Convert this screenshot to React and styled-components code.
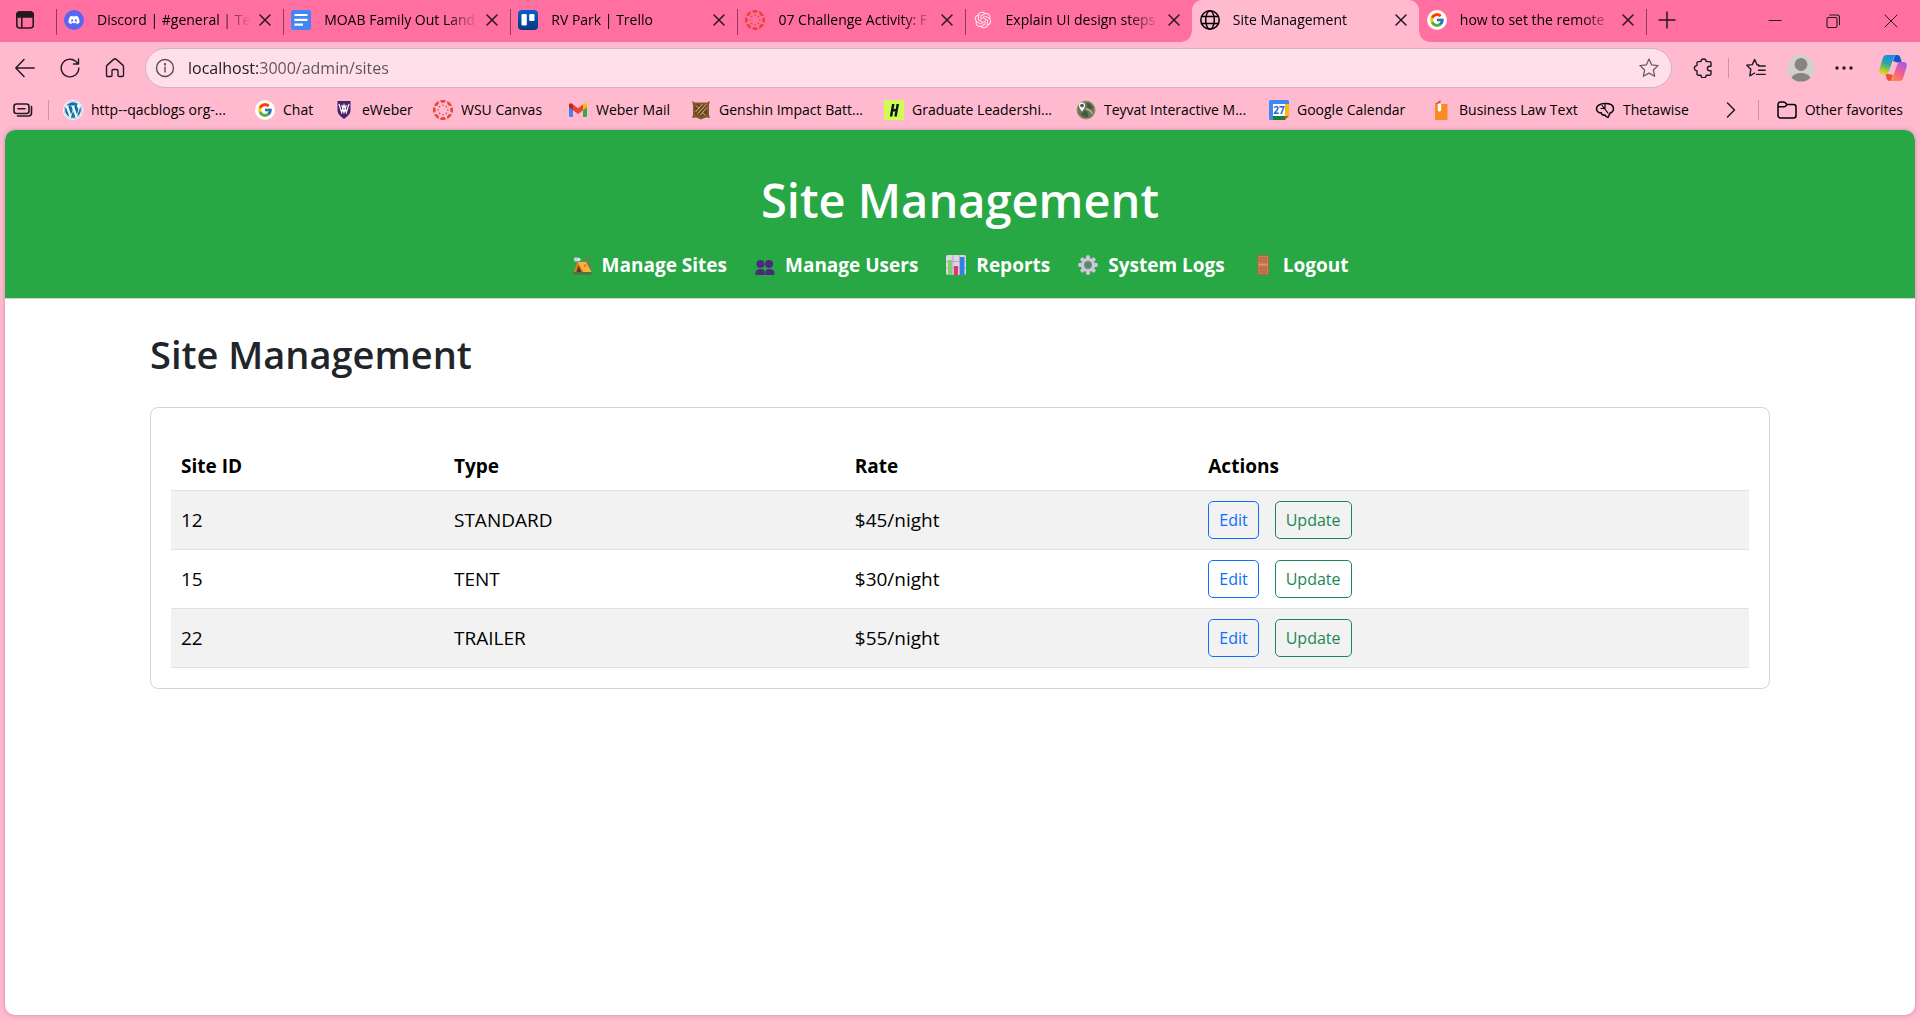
import React from "react";
import styled, { createGlobalStyle, css } from "styled-components";
import { FaDiscord, FaWordpressSimple } from "react-icons/fa";
import { FcGoogle } from "react-icons/fc";
import { RiOpenaiFill } from "react-icons/ri";

const strip = "#ff6f9f";
const chrome = "#ffbad0";

const GlobalStyle = createGlobalStyle`
  * { box-sizing: border-box; }
  body {
    margin: 0;
    background: ${chrome};
    color: #000;
    font-family: "Open Sans", "Noto Sans", sans-serif;
  }
  button, input { font: inherit; }
  svg { display: block; flex: none; }
`;

/* ---------- Browser window ---------- */

const Browser = styled.div`
  min-height: 100vh;
  display: flex;
  flex-direction: column;
`;

const IconButton = styled.button`
  display: flex;
  align-items: center;
  justify-content: center;
  flex: none;
  width: ${(p) => p.$w || 20}px;
  height: 30px;
  padding: 0;
  border: 0;
  background: none;
  color: ${(p) => p.$color || "#241a1e"};
`;

const TabStrip = styled.div`
  display: flex;
  height: 42px;
  background: ${strip};
`;

const StripStart = styled.div`
  display: flex;
  flex: none;
  width: 56px;
  height: 40px;
  padding-left: 15px;
  align-items: center;
`;

const Tabs = styled.div`
  display: flex;
  flex: 0 1 1590px;
  min-width: 0;
`;

const flare = css`
  content: "";
  position: absolute;
  bottom: 0;
  width: 10px;
  height: 10px;
`;

const Tab = styled.div`
  position: relative;
  display: flex;
  align-items: center;
  flex: 1 1 0;
  min-width: 0;
  padding: 0 12px 2px 8px;
  ${(p) =>
    p.$active
      ? css`
          background: ${chrome};
          border-radius: 10px 10px 0 0;
          &::before {
            ${flare}
            left: -10px;
            background: radial-gradient(circle at top left, ${strip} 9px, ${chrome} 10px);
          }
          &::after {
            ${flare}
            right: -10px;
            background: radial-gradient(circle at top right, ${strip} 9px, ${chrome} 10px);
          }
        `
      : null}
`;

const TabDivider = styled.span`
  position: absolute;
  left: 0;
  top: 9px;
  width: 1px;
  height: 26px;
  background: #8d3d58;
`;

const TabTitle = styled.span`
  flex: 1;
  min-width: 0;
  margin: 0 8px 0 13px;
  overflow: hidden;
  white-space: nowrap;
  font-size: 14px;
  line-height: 20px;
  mask-image: linear-gradient(to right, #000 calc(100% - 32px), transparent 100%);
`;

const StripEnd = styled.div`
  position: relative;
  display: flex;
  flex: 1;
  align-items: center;
  height: 40px;
  padding: 0 19px 0 11px;
`;

const WindowButtons = styled.div`
  display: flex;
  gap: 38px;
  margin-left: auto;
  padding-top: 2px;
`;

const Toolbar = styled.div`
  display: flex;
  align-items: center;
  padding: 6px 3px 0 15px;
`;

const NavButtons = styled.div`
  display: flex;
  gap: 25px;
  margin-right: 20px;
`;

const AddressBar = styled.form`
  display: flex;
  flex: 1;
  align-items: center;
  height: 40px;
  padding: 0 12px 0 9px;
  border: 1px solid #cdb4be;
  border-radius: 20px;
  background: #ffe0ea;
`;

const AddressInput = styled.input`
  flex: 1;
  min-width: 0;
  margin-left: 13px;
  padding: 0;
  border: 0;
  outline: 0;
  font-size: 16px;
  line-height: 24px;
  color: transparent;
  background: linear-gradient(to right, #1f1a1c 70px, #5e5258 70px);
  background-clip: text;
`;

const ToolbarEnd = styled.div`
  display: flex;
  align-items: center;
  gap: 15px;
  margin-left: 21px;
`;

const Divider = styled.span`
  flex: none;
  width: 1px;
  height: 20px;
  background: #cf93a7;
`;

const BookmarksBar = styled.nav`
  display: flex;
  align-items: center;
  gap: 14px;
  height: 42px;
  padding: 2px 17px 0 12px;
`;

const BookmarkList = styled.div`
  display: flex;
  flex: 1;
  min-width: 0;
`;

const Bookmark = styled.a`
  display: flex;
  align-items: center;
  gap: 8px;
  flex: 0 1 ${(p) => (p.$w ? `${p.$w}px` : "auto")};
  font-size: 14px;
  line-height: 20px;
  white-space: nowrap;
  color: #000;
  text-decoration: none;
`;

const BookmarksEnd = styled.div`
  display: flex;
  align-items: center;
  gap: 18px;
`;

/* ---------- Web page ---------- */

const Page = styled.div`
  flex: 1;
  margin: 0 5px 5px;
  overflow: hidden;
  border-radius: 10px;
  background: #fff;
  box-shadow: 0 0 4px rgba(120, 40, 70, 0.35);
`;

const Header = styled.header`
  padding: 40px 20px 18px;
  border-bottom: 1px solid #cfd4d1;
  background: #28a745;
  color: #fff;
  text-align: center;
`;

const HeaderTitle = styled.h1`
  margin: 0 0 20px;
  font-size: 47px;
  font-weight: 600;
  line-height: 60px;
`;

const HeaderNav = styled.nav`
  display: flex;
  justify-content: center;
  gap: 28px;
`;

const HeaderLink = styled.a`
  display: flex;
  align-items: center;
  gap: 10px;
  color: #fff;
  font-size: 19px;
  font-weight: 700;
  line-height: 30px;
  text-decoration: none;
`;

const Container = styled.main`
  max-width: 1650px;
  margin: 0 auto;
  padding: 31px 15px;
`;

const PageTitle = styled.h2`
  margin: 0 0 29px;
  color: #212529;
  font-size: 38px;
  font-weight: 600;
  line-height: 48px;
`;

const Card = styled.section`
  padding: 32px 20px 20px;
  border: 1px solid #d3d4d5;
  border-radius: 8px;
`;

const Table = styled.table`
  width: 100%;
  border-spacing: 0;
  table-layout: fixed;
  font-size: 19px;
  line-height: 30px;
  text-align: left;
`;

const Col = styled.col`
  width: ${(p) => p.$w};
`;

const Th = styled.th`
  padding: 11px 10px 9px;
  border-bottom: 1px solid #dee2e6;
  font-weight: 700;
`;

const Row = styled.tr`
  &:nth-child(odd) { background: #f2f2f2; }
`;

const Td = styled.td`
  padding: 10px;
  border-bottom: 1px solid #dee2e6;
`;

const Actions = styled.div`
  display: flex;
  gap: 16px;
`;

const ActionButton = styled.button`
  height: 38px;
  padding: 0 10px;
  border: 1px solid ${(p) => p.$color};
  border-radius: 5px;
  background: transparent;
  color: ${(p) => p.$color};
  font-size: 16px;
  line-height: 24px;
`;

/* ---------- Icons ---------- */

const Line = ({ w = 20, h = w, sw = 1.4, children, ...rest }) => (
  <svg width={w} height={h} viewBox={`0 0 ${w} ${h}`} fill="none" stroke="currentColor" strokeWidth={sw} strokeLinecap="round" strokeLinejoin="round" aria-hidden="true" {...rest}>
    {children}
  </svg>
);
const Art = ({ w = 20, h = 20, children }) => (
  <svg width={w} height={h} viewBox={`0 0 ${w} ${h}`} aria-hidden="true">{children}</svg>
);

const TabActions = () => (
  <Line sw={1.6}>
    <rect x="1.8" y="2" width="16.4" height="16" rx="3" />
    <path d="M1.8 7V5a3 3 0 0 1 3-3h10.400a3 3 0 0 1 3 3v2z" fill="currentColor" />
    <path d="M6.800 7v11" />
  </Line>
);
const Close = () => <Line w={12} sw={1.5}><path d="M1 1l10 10M11 1L1 11" /></Line>;
const Plus = () => <Line w={18} sw={1.5}><path d="M9 1v16M1 9h16" /></Line>;
const Minimize = () => <Line w={14} sw={1.1}><path d="M1 6.500h12" /></Line>;
const Restore = () => (
  <Line w={14} sw={1.1}>
    <rect x="1" y="3.500" width="10" height="10" rx="1.500" />
    <path d="M3.800 1h7.200a2.500 2.500 0 0 1 2.500 2.500v7.300" />
  </Line>
);
const WinClose = () => <Line w={14} sw={1}><path d="M1 1l12 12M13 1L1 13" /></Line>;
const Back = () => <Line sw={1.5}><path d="M19.200 10H1M9 1.500L.800 10 9 18.500" /></Line>;
const Reload = () => <Line><path d="M18.800 10a8.800 8.800 0 1 1-2.900-6.500l2.400 2.200M18.500 1v5h-5" /></Line>;
const Home = () => <Line><path d="M1.500 8.600c0-.6.300-1.100.700-1.500L8.700 1.400a2 2 0 0 1 2.600 0l6.500 5.700c.4.400.700.900.7 1.500v8.600c0 .8-.5 1.300-1.300 1.300h-2.900c-.8 0-1.300-.5-1.300-1.300v-4.500c0-.8-.5-1.200-1.300-1.200H8.300c-.8 0-1.300.4-1.300 1.200v4.500c0 .8-.5 1.300-1.300 1.300H2.800c-.8 0-1.300-.5-1.300-1.300z" /></Line>;
const Info = () => <Line sw={1.4} color="#574c51"><circle cx="10" cy="10" r="8.500" /><path d="M10 9v5" /><circle cx="10" cy="6.300" r=".5" fill="currentColor" /></Line>;
const Star = () => <Line sw={1.3}><path d="M10 1l2.700 5.900 6.400.7-4.800 4.300 1.400 6.400L10 15.100l-5.700 3.200 1.400-6.400L.900 7.600l6.400-.7z" /></Line>;
const Puzzle = () => <Line><path d="M8 3.600a2.600 2.600 0 0 1 5.200 0h3.600a1.200 1.200 0 0 1 1.200 1.200v3.400h-1.300a2.300 2.300 0 0 0 0 4.600H18v3.200a1.200 1.200 0 0 1-1.200 1.200h-3.600a2.600 2.600 0 0 1-5.200 0H5.200A1.200 1.200 0 0 1 4 16v-3.200a2.600 2.600 0 0 1 0-5.200V4.800a1.200 1.200 0 0 1 1.200-1.200z" /></Line>;
const Favorites = () => <Line><path d="M12.800 6.900l-1.800-.1L8.700 1.400 6.300 6.600l-5.500.7 4 4-1 6.500 4.900-2.800M12.500 8h6.700M12.500 12.200h6.700M10.500 16.400h8.700" /></Line>;
const Avatar = () => (
  <Art w={28} h={28}>
    <circle cx="14" cy="14" r="13.800" fill="#d2cfcc" />
    <circle cx="14" cy="10.500" r="6.400" fill="#878380" />
    <path d="M4.500 23.700a10.500 8 0 0 1 19 0 13.500 13.500 0 0 1-19 0z" fill="#878380" />
  </Art>
);
const Dots = () => <Line w={18}><g fill="currentColor" stroke="none"><circle cx="2" cy="9" r="1.700" /><circle cx="9" cy="9" r="1.700" /><circle cx="16" cy="9" r="1.700" /></g></Line>;
const Copilot = () => (
  <Art w={28} h={28}>
    <defs>
      <linearGradient id="cpA" x1=".5" y1="0" x2=".2" y2="1"><stop offset="0" stopColor="#168be8" /><stop offset=".45" stopColor="#2fa7a0" /><stop offset=".75" stopColor="#9ccc35" /><stop offset="1" stopColor="#ffcf1f" /></linearGradient>
      <linearGradient id="cpB" x1=".8" y1="0" x2=".3" y2="1"><stop offset="0" stopColor="#a05be8" /><stop offset=".5" stopColor="#ef5b96" /><stop offset="1" stopColor="#ff8a4a" /></linearGradient>
    </defs>
    <path d="M16 1h2.500c1.600 0 2.500 1.200 3 3l1.300 4.500H18L14 7z" fill="#1555c8" />
    <path d="M12 27h-1.500c-1.600 0-2.500-1.200-3-3L6.500 20H10l4 1z" fill="#e9552f" />
    <path d="M7.500 1H18c-2 0-3 1.300-3.600 3.200L10 17c-.7 2-1.700 3.200-3.500 3.200H3C.8 20.200-.2 18.300.4 15.500L3.800 4C4.500 2.200 5.500 1 7.500 1z" fill="url(#cpA)" />
    <path d="M20.500 27H10c2 0 3-1.300 3.600-3.200L18 11.300c.7-2 1.700-3.300 3.500-3.300H25c2.200 0 3.200 1.900 2.600 4.700L24.200 24c-.7 1.800-1.700 3-3.700 3z" fill="url(#cpB)" />
  </Art>
);
const Panel = () => <Line sw={1.6}><rect x="1" y="4" width="15" height="9.500" rx="2.500" /><path d="M5 8.700h7M18.500 6.500v6.500a3 3 0 0 1-3 3H4.500" /></Line>;
const Chevron = () => <Line w={10} h={18} sw={1.5}><path d="M1.500 2l7 7-7 7" /></Line>;
const Folder = () => <Line sw={1.500}><path d="M1 4.500a2.500 2.500 0 0 1 2.500-2.500h3c.8 0 1.300.3 1.800.8L10 4.500h6.500A2.500 2.500 0 0 1 19 7v8.500a2.500 2.500 0 0 1-2.500 2.500h-13A2.500 2.500 0 0 1 1 15.500zM1 6.800h6c.7 0 1.100-.2 1.500-.6L10 4.500" /></Line>;
const Globe = () => <Line sw={1.500}><circle cx="10" cy="10" r="9.200" /><ellipse cx="10" cy="10" rx="4.300" ry="9.200" /><path d="M1.700 6.500h16.600M1.700 13.500h16.600" /></Line>;

const Discord = () => <Art><circle cx="10" cy="10" r="10" fill="#5865f2" /><FaDiscord x="4" y="4" size={12} color="#fff" /></Art>;
const Docs = () => <Art><rect width="20" height="20" rx="2.500" fill="#4285f4" /><path d="M3.500 5h13M3.500 9.800h13M3.500 14.600h8.500" stroke="#fff" strokeWidth="2.200" /></Art>;
const Trello = () => (
  <Art>
    <defs><linearGradient id="tr" x2="0" y2="1"><stop stopColor="#0c5cc7" /><stop offset="1" stopColor="#05387e" /></linearGradient></defs>
    <rect width="20" height="20" rx="4" fill="url(#tr)" /><rect x="3.500" y="4" width="5.300" height="11.500" rx="1" fill="#fff" /><rect x="11.200" y="4" width="5.300" height="7" rx="1" fill="#fff" />
  </Art>
);
const Canvas = () => (
  <Art>
    {[0, 45, 90, 135, 180, 225, 270, 315].map((a) => (
      <g key={a} transform={`rotate(${a} 10 10)`} fill="#ea4335">
        <path d="M6.900.5a10 10 0 0 1 6.200 0 3.200 3.200 0 0 1-6.200 0z" />
        <circle cx="10" cy="5.200" r=".8" />
      </g>
    ))}
  </Art>
);
const OpenAI = () => <Art><RiOpenaiFill x="0" y="0" size={20} color="#ffe3ec" /></Art>;
const Google = () => <Art><circle cx="10" cy="10" r="10" fill="#fff" /><FcGoogle x="2" y="2" size={16} /></Art>;
const WordPress = () => <Art><circle cx="10" cy="10" r="10" fill="#fff" /><circle cx="10" cy="10" r="9" fill="#0d72a5" /><FaWordpressSimple x="1" y="1" size={18} color="#fff" /></Art>;
const EWeber = () => <Art><path d="M3.500 1h13v9c0 4-3 6.500-6.500 9-3.500-2.500-6.500-5-6.500-9z" fill="#48226b" /><path d="M5 4l2.700 8.500L10 5l2.300 7.500L15 4M7.800 5L10 12.500 12.300 5" fill="none" stroke="#fff" strokeWidth="1.200" /></Art>;
const Gmail = () => (
  <Art>
    <path d="M1 6v9.500A1.500 1.500 0 0 0 2.500 17H5V8z" fill="#4285f4" />
    <path d="M19 6v9.500a1.500 1.500 0 0 1-1.500 1.500H15V8z" fill="#34a853" />
    <path d="M15 4.500l1.200-1C17.500 2.600 19 3.500 19 5v2.200l-4 3z" fill="#fbbc04" />
    <path d="M1 5c0-1.500 1.500-2.400 2.800-1.500l1.200 1v5.700l-4-3z" fill="#c5221f" />
    <path d="M5 4.500l5 3.800 5-3.800v5.700L10 14l-5-3.800z" fill="#ea4335" />
  </Art>
);
const Genshin = () => (
  <Art>
    <path d="M1 1l3 1.500h12L19 1l-1 4v10l1 3-4-.5-5 2-5-2-4 .5 1-3V5z" fill="#81572d" />
    <path d="M4 4.500h12V14l-6 3-6-3z" fill="#6b4521" />
    <path d="M4.500 12l7-8M6.500 14l9-10M9 15.500l7-8M5 5.500l3 3M11 12l3 3" stroke="#d9b67a" strokeWidth="1" />
  </Art>
);
const Handshake = () => <Art><rect width="20" height="20" fill="#d3fb52" /><path d="M8 4h2.500L9.700 9h2L12.500 4H15l-2.200 12.500h-2.500l.9-5h-2l-.9 5H5.800z" fill="#051b2c" /></Art>;
const Teyvat = () => (
  <Art>
    <circle cx="10" cy="10" r="9" fill="#6f7851" stroke="#9a8f72" strokeWidth="1" />
    <path d="M11 2.500c4 1 5 3 6 6l-4 1-2-3zM8 11c3-1 5 2 4 6-3 .500-6-1-7-3z" fill="#3f5a46" />
    <path d="M10 9c3 0 5 2 6.500 5" stroke="#b7b482" strokeWidth="1.500" fill="none" />
    <path d="M6 11.500C4 9 3 7.500 3 5.600a3 3 0 0 1 6 0c0 1.900-1 3.400-3 5.900z" fill="#fff" /><circle cx="6" cy="5.600" r="1.800" fill="#2b5a78" />
  </Art>
);
const CalendarText = styled.text`
  font: 700 10px "Open Sans", "Noto Sans", sans-serif;
  fill: #1a67d2;
  text-anchor: middle;
`;
const Calendar = () => (
  <Art>
    <path d="M1.500 0h17A1.500 1.500 0 0 1 20 1.500V4H4v16H1.500A1.500 1.500 0 0 1 0 18.500v-17A1.500 1.500 0 0 1 1.500 0z" fill="#4285f4" />
    <path d="M16 4h4v12h-4z" fill="#fbbc04" /><path d="M4 16h12v4H4z" fill="#188038" /><path d="M16 16h4l-4 4z" fill="#ea4335" />
    <path d="M4 4h12v12H4z" fill="#fff" />
    <CalendarText x="10" y="14">27</CalendarText>
  </Art>
);
const LawBook = () => <Art><path d="M4 4L9.500 0v4z" fill="#d9532c" /><path d="M4 4h12.500v16H4z" fill="#f98b25" /><path d="M6.800 3.500h3.400v7l-1.700 1.200-1.700-1.200z" fill="#fff" /></Art>;
const Thetawise = () => (
  <Line sw={1.5}>
    <path d="M10 15c-2 .5-3.500-.5-3.500-2C3.500 13 1.500 11 1.500 8.500S4.500 3.500 10 3.500s8.500 2 8.500 5c0 2.500-1.500 4-3.500 4.700L13 17.500c-1.500 0-2.300-1-3-2.500z" />
    <path d="M6 8.500h4M7 5.500l6 7.500M10 4.500v4" strokeWidth="1.200" />
  </Line>
);

const Camp = () => (
  <Art>
    <path d="M1 16.500h18.500v3H1z" fill="#55703e" /><circle cx="4" cy="4.500" r="2.200" fill="#c8ccda" /><circle cx="6.800" cy="4.500" r="1.800" fill="#e6e3ef" />
    <path d="M15.500.5l3 4h-1.300l2.300 4h-1.500l2 4.500h-8l1.700-4.500H12l2.200-4H13z" fill="#5b8a4c" />
    <path d="M5.500 7h8.500l5.500 10H2z" fill="#fbb040" /><path d="M5.500 7L2 17h2.500l2-5.500L10 17h1.500z" fill="#dc7826" /><path d="M6.500 10.500L4.300 17h5.500z" fill="#5c3a27" /><path d="M12 9.500h2v2h-2z" fill="#e66b25" />
  </Art>
);
const Users = () => (
  <Art>
    <g fill="#4b2a7b"><circle cx="5.500" cy="9" r="4" /><circle cx="14" cy="9" r="4" /><path d="M.5 20v-2.500c0-2.300 2-3.500 5-3.500s4.300 1.200 4.300 3.500V20zM10.300 20v-2.500c0-2.300 1-3.500 4-3.500s5 1.200 5 3.500V20z" /></g>
  </Art>
);
const Chart = () => (
  <Art>
    <rect width="20" height="20" rx="2" fill="#dcd6e8" /><path d="M0 6.500h20M0 13h20M7 0v20M13.500 0v20" stroke="#a8a0b8" strokeWidth=".8" />
    <path d="M2 5h4v15H2z" fill="#7fd068" /><path d="M8 11h4v9H8z" fill="#e63372" /><path d="M14 2h4.500v18H14z" fill="#2d83e0" />
  </Art>
);
const Gear = () => (
  <Art>
    {[0, 45, 90, 135].map((a) => <rect key={a} x="8" y=".3" width="4" height="19.400" rx="1.300" fill="#cdc5d8" transform={`rotate(${a} 10 10)`} />)}
    <circle cx="10" cy="10" r="7.200" fill="#cdc5d8" /><circle cx="10" cy="10" r="4" fill="#83788f" /><circle cx="10" cy="10" r="2.500" fill="#28a745" />
  </Art>
);
const Door = () => (
  <Art>
    <path d="M4.500 0H16v20H4.500z" fill="#b0653f" /><path d="M5.500 1H15v18H5.500z" fill="#cf8059" />
    <path d="M7 2.500h6.500v4.500H7zM7 12h6.500v2.500H7zM7 16h6.500v2H7z" fill="#c4734d" stroke="#a85e3c" strokeWidth=".6" /><path d="M5.500 9.500H15" stroke="#e09a52" strokeWidth="1" />
  </Art>
);

/* ---------- Data ---------- */

const tabs = [
  { title: "Discord | #general | Tea", Icon: Discord },
  { title: "MOAB Family Out Land", Icon: Docs },
  { title: "RV Park | Trello", Icon: Trello },
  { title: "07 Challenge Activity: F", Icon: Canvas },
  { title: "Explain UI design steps", Icon: OpenAI },
  { title: "Site Management", Icon: Globe, active: true },
  { title: "how to set the remote", Icon: Google },
];

const bookmarks = [
  { label: "http--qacblogs org-...", Icon: WordPress, w: 192 },
  { label: "Chat", Icon: Google, w: 79 },
  { label: "eWeber", Icon: EWeber, w: 99 },
  { label: "WSU Canvas", Icon: Canvas, w: 135 },
  { label: "Weber Mail", Icon: Gmail, w: 123 },
  { label: "Genshin Impact Batt...", Icon: Genshin, w: 193 },
  { label: "Graduate Leadershi...", Icon: Handshake, w: 192 },
  { label: "Teyvat Interactive M...", Icon: Teyvat, w: 193 },
  { label: "Google Calendar", Icon: Calendar, w: 162 },
  { label: "Business Law Text", Icon: LawBook, w: 164 },
  { label: "Thetawise", Icon: Thetawise },
];

const links = [
  { label: "Manage Sites", Icon: Camp },
  { label: "Manage Users", Icon: Users },
  { label: "Reports", Icon: Chart },
  { label: "System Logs", Icon: Gear },
  { label: "Logout", Icon: Door },
];

const sites = [
  { id: 12, type: "STANDARD", rate: 45 },
  { id: 15, type: "TENT", rate: 30 },
  { id: 22, type: "TRAILER", rate: 55 },
];

export default function App() {
  return (
    <Browser>
      <GlobalStyle />
      <TabStrip>
        <StripStart>
          <IconButton aria-label="Tab actions"><TabActions /></IconButton>
        </StripStart>
        <Tabs>
          {tabs.map(({ title, Icon, active }, i) => (
            <Tab key={title} $active={active}>
              {!active && !tabs[i - 1]?.active && <TabDivider />}
              <Icon />
              <TabTitle>{title}</TabTitle>
              <IconButton $w={12} aria-label="Close tab"><Close /></IconButton>
            </Tab>
          ))}
        </Tabs>
        <StripEnd>
          <TabDivider />
          <IconButton aria-label="New tab"><Plus /></IconButton>
          <WindowButtons>
            <IconButton aria-label="Minimize"><Minimize /></IconButton>
            <IconButton aria-label="Restore"><Restore /></IconButton>
            <IconButton aria-label="Close window"><WinClose /></IconButton>
          </WindowButtons>
        </StripEnd>
      </TabStrip>

      <Toolbar>
        <NavButtons>
          <IconButton aria-label="Back"><Back /></IconButton>
          <IconButton aria-label="Refresh"><Reload /></IconButton>
          <IconButton aria-label="Home"><Home /></IconButton>
        </NavButtons>
        <AddressBar>
          <Info />
          <AddressInput aria-label="Address" defaultValue="localhost:3000/admin/sites" />
          <IconButton type="button" $color="#6b5d63" aria-label="Add to favorites"><Star /></IconButton>
        </AddressBar>
        <ToolbarEnd>
          <IconButton aria-label="Extensions"><Puzzle /></IconButton>
          <Divider />
          <IconButton $w={24} aria-label="Favorites"><Favorites /></IconButton>
          <IconButton $w={36} aria-label="Profile"><Avatar /></IconButton>
          <IconButton aria-label="Settings and more"><Dots /></IconButton>
          <IconButton $w={48} aria-label="Copilot"><Copilot /></IconButton>
        </ToolbarEnd>
      </Toolbar>

      <BookmarksBar>
        <IconButton $w={22} aria-label="Workspaces"><Panel /></IconButton>
        <Divider />
        <BookmarkList>
          {bookmarks.map(({ label, Icon, w }) => (
            <Bookmark key={label} href="#" $w={w}><Icon />{label}</Bookmark>
          ))}
        </BookmarkList>
        <BookmarksEnd>
          <IconButton $w={18} aria-label="More favorites"><Chevron /></IconButton>
          <Divider />
          <Bookmark href="#"><Folder />Other favorites</Bookmark>
        </BookmarksEnd>
      </BookmarksBar>

      <Page>
        <Header>
          <HeaderTitle>Site Management</HeaderTitle>
          <HeaderNav>
            {links.map(({ label, Icon }) => (
              <HeaderLink key={label} href="#"><Icon />{label}</HeaderLink>
            ))}
          </HeaderNav>
        </Header>
        <Container>
          <PageTitle>Site Management</PageTitle>
          <Card>
            <Table>
              <colgroup>
                <Col $w="17.3%" /><Col $w="25.4%" /><Col $w="22.4%" /><Col $w="34.9%" />
              </colgroup>
              <thead>
                <tr><Th>Site ID</Th><Th>Type</Th><Th>Rate</Th><Th>Actions</Th></tr>
              </thead>
              <tbody>
                {sites.map((s) => (
                  <Row key={s.id}>
                    <Td>{s.id}</Td>
                    <Td>{s.type}</Td>
                    <Td>{`$${s.rate}/night`}</Td>
                    <Td>
                      <Actions>
                        <ActionButton $color="#0d6efd">Edit</ActionButton>
                        <ActionButton $color="#198754">Update</ActionButton>
                      </Actions>
                    </Td>
                  </Row>
                ))}
              </tbody>
            </Table>
          </Card>
        </Container>
      </Page>
    </Browser>
  );
}
